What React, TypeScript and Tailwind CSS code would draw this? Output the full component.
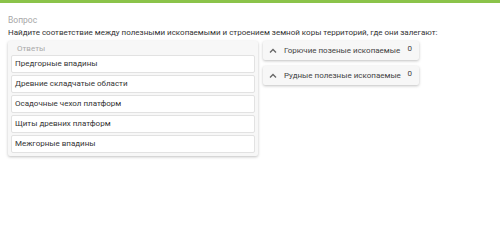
import React from 'react'

const answers = [
  'Предгорные впадины',
  'Древние складчатые области',
  'Осадочные чехол платформ',
  'Щиты древних платформ',
  'Межгорные впадины',
]

const groups = ['Горючие позеные ископаемые', 'Рудные полезные ископаемые']

function ChevronUp() {
  return (
    <svg width="8" height="6" viewBox="0 0 8 6" fill="none" className="shrink-0">
      <path d="M1 4.5 L4 1.5 L7 4.5" stroke="#666" strokeWidth="1.3" />
    </svg>
  )
}

export default function App() {
  return (
    <div className="w-[500px] h-[244px] bg-white font-['Roboto',sans-serif] overflow-hidden">
      <div className="h-[3px] bg-[#8bc34a]" />
      <div className="px-[8px] pt-[12px]">
        <div className="text-[8.5px] leading-[11px] text-[#a8a8a8]">Вопрос</div>
        <div className="text-[8px] leading-[12px] text-[#333] mt-[1px] whitespace-nowrap">
          Найдите соответствие между полезными ископаемыми и строением земной коры территорий, где они залегают:
        </div>
        <div className="flex items-start gap-[5px] mt-[2px]">
          <div className="w-[250px] bg-[#f7f7f7] rounded-[2px] shadow-[0_1px_3px_rgba(0,0,0,0.25)] px-[3px] pt-[2px] pb-[3px]">
            <div className="text-[8px] leading-[12px] text-[#aaa] pl-[6px]">Ответы</div>
            <div className="flex flex-col gap-[2px]">
              {answers.map((a) => (
                <div
                  key={a}
                  className="h-[18px] bg-white border border-[#e2e2e2] rounded-[2px] flex items-center px-[3px] text-[8px] text-[#333]"
                >
                  {a}
                </div>
              ))}
            </div>
          </div>
          <div className="flex flex-col gap-[6px]">
            {groups.map((g) => (
              <div
                key={g}
                className="w-[156px] h-[19px] bg-[#f7f7f7] rounded-[2px] shadow-[0_1px_3px_rgba(0,0,0,0.25)] flex items-center pl-[6px] pr-[7px]"
              >
                <ChevronUp />
                <span className="ml-[7px] text-[8px] text-[#444] whitespace-nowrap">{g}</span>
                <span className="ml-auto text-[8px] text-[#444] self-start mt-[2px]">0</span>
              </div>
            ))}
          </div>
        </div>
      </div>
    </div>
  )
}
